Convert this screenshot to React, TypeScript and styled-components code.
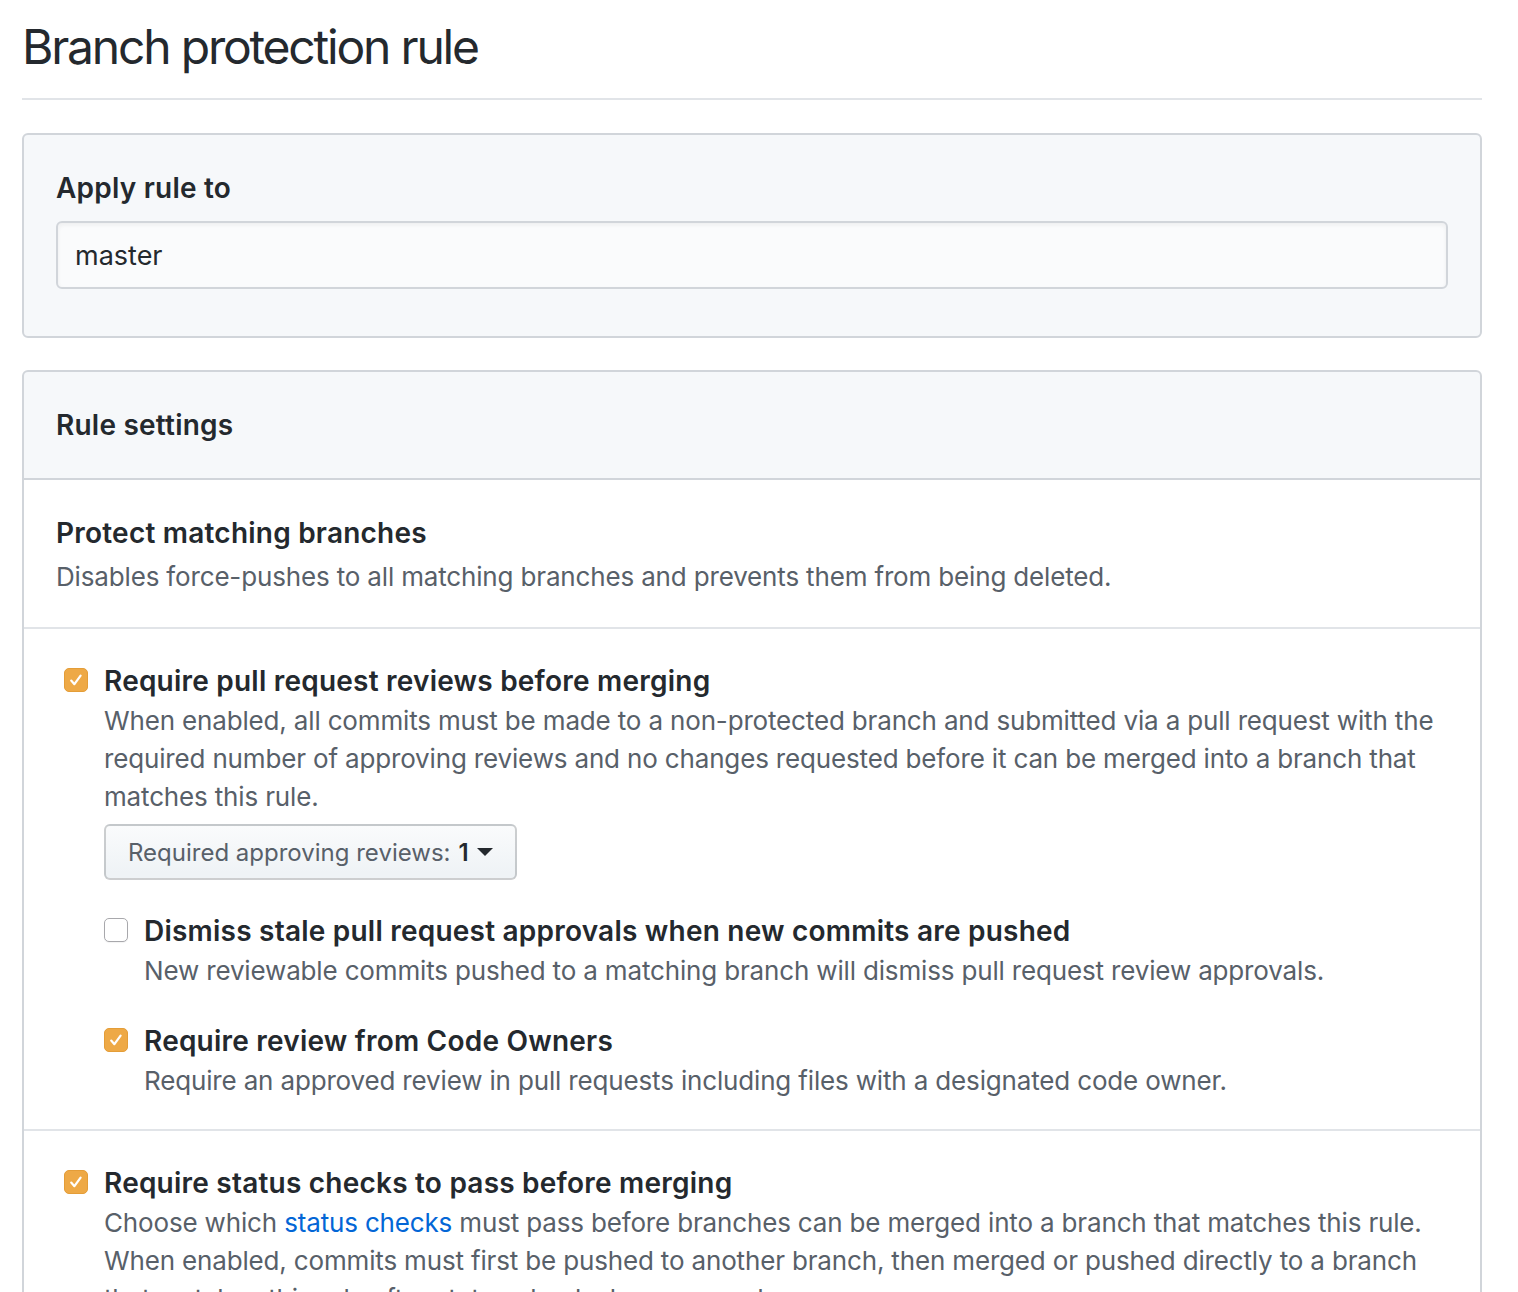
import React from 'react';
import styled, { createGlobalStyle } from 'styled-components';

const GlobalStyle = createGlobalStyle`
    html, body {
        margin: 0;
        padding: 0;
        background: #ffffff;
    }
    body {
        font-family: Inter, "Liberation Sans", Arial, sans-serif;
        color: #24292e;
        -webkit-font-smoothing: antialiased;
    }
`;

const Page = styled.div`
    padding: 0 36px 0 22px;
`;

const PageTitle = styled.h2`
    margin: 0 0 33px;
    padding: 17px 0 21px;
    font-size: 48px;
    line-height: 60px;
    font-weight: 400;
    letter-spacing: -2.2px;
    color: #24292e;
    border-bottom: 2px solid #e1e4e8;
`;

const Box = styled.div`
    background: #f6f8fa;
    border: 2px solid #d1d5da;
    border-radius: 6px;
    margin-bottom: 32px;
`;

const BoxBody = styled.div`
    padding: 32px 32px 47px;
`;

const Label = styled.h3<{ $flush?: boolean }>`
    margin: ${(p) => (p.$flush ? '0' : '0 0 12px')};
    font-size: 28px;
    line-height: 42px;
    font-weight: 600;
    letter-spacing: 0.22px;
`;

const TextInput = styled.input`
    display: block;
    box-sizing: border-box;
    width: 100%;
    height: 68px;
    padding: 0 17px;
    font: inherit;
    font-size: 27px;
    color: #24292e;
    background: #fafbfc;
    border: 2px solid #d1d5da;
    border-radius: 6px;
    box-shadow: inset 0 2px 4px rgba(27, 31, 35, 0.06);
    outline: none;
`;

const BoxHeader = styled.div`
    padding: 32px;
    border-bottom: 2px solid #d1d5da;
`;

const Section = styled.div<{ $first?: boolean }>`
    background: #ffffff;
    padding: ${(p) => (p.$first ? '33px 32px 31px' : '32px 32px 29px')};
    border-top: ${(p) => (p.$first ? 'none' : '2px solid #e1e4e8')};
    &:last-child {
        border-bottom-left-radius: 6px;
        border-bottom-right-radius: 6px;
    }
`;

const SectionTitle = styled.h4`
    margin: 0;
    font-size: 28px;
    line-height: 41px;
    font-weight: 600;
    letter-spacing: 0.22px;
    color: #24292e;
`;

const Note = styled.p<{ $spaced?: boolean }>`
    margin: ${(p) => (p.$spaced ? '4px 0 0' : '0')};
    font-size: 26px;
    line-height: 38px;
    letter-spacing: -0.16px;
    color: #586069;
`;

const Link = styled.a`
    color: #0366d6;
    text-decoration: none;
`;

const CheckItem = styled.div<{ $nested?: boolean }>`
    display: grid;
    grid-template-columns: 48px 1fr;
    margin: ${(p) => (p.$nested ? '31px 0 0 -8px' : '0')};
`;

const CheckBox = styled.span<{ $checked?: boolean }>`
    box-sizing: border-box;
    width: 24px;
    height: 24px;
    margin: 7px 0 0 8px;
    border-radius: 5px;
    display: flex;
    align-items: center;
    justify-content: center;
    background: ${(p) => (p.$checked ? '#eea946' : '#ffffff')};
    border: ${(p) => (p.$checked ? '1px solid #e49d38' : '1.5px solid #a8a8ac')};
    box-shadow: ${(p) => (p.$checked ? 'none' : '0 1px 1px rgba(0,0,0,0.05)')};
`;

const Dropdown = styled.button`
    display: inline-flex;
    align-items: center;
    box-sizing: border-box;
    height: 56px;
    margin-top: 8px;
    padding: 0 22px 0 22px;
    font: inherit;
    font-size: 24px;
    color: #586069;
    background: linear-gradient(#fafbfc, #eff3f6 90%);
    border: 2px solid rgba(27, 31, 35, 0.2);
    border-radius: 6px;
    cursor: pointer;
`;

const DropdownValue = styled.strong`
    color: #24292e;
    font-weight: 600;
    margin-left: 8px;
`;

const Caret = styled.span`
    display: inline-block;
    width: 0;
    height: 0;
    margin-left: 8px;
    border-top: 8px solid #24292e;
    border-left: 8px solid transparent;
    border-right: 8px solid transparent;
`;

function Check({ checked }: { checked?: boolean }) {
    return (
        <CheckBox $checked={checked}>
            {checked && (
                <svg width="16" height="16" viewBox="0 0 16 16">
                    <path d="M3.2 8.6 L6.4 12.2 L12.6 3.6" fill="none" stroke="#fff" strokeWidth="2.2" strokeLinecap="round" strokeLinejoin="round" />
                </svg>
            )}
        </CheckBox>
    );
}

function Option({ checked, title, nested, children }: { checked?: boolean; title: string; nested?: boolean; children?: React.ReactNode }) {
    return (
        <CheckItem $nested={nested}>
            <Check checked={checked} />
            <div>
                <SectionTitle>{title}</SectionTitle>
                {children}
            </div>
        </CheckItem>
    );
}

export default function App() {
    return (
        <Page>
            <GlobalStyle />
            <PageTitle>Branch protection rule</PageTitle>

            <Box>
                <BoxBody>
                    <Label>Apply rule to</Label>
                    <TextInput defaultValue="master" />
                </BoxBody>
            </Box>

            <Box>
                <BoxHeader>
                    <Label $flush>Rule settings</Label>
                </BoxHeader>

                <Section $first>
                    <SectionTitle>Protect matching branches</SectionTitle>
                    <Note $spaced>Disables force-pushes to all matching branches and prevents them from being deleted.</Note>
                </Section>

                <Section>
                    <Option checked title="Require pull request reviews before merging">
                        <Note>
                            When enabled, all commits must be made to a non-protected branch and submitted via a pull request with the
                            required number of approving reviews and no changes requested before it can be merged into a branch that
                            matches this rule.
                        </Note>
                        <Dropdown>
                            Required approving reviews:<DropdownValue>1</DropdownValue>
                            <Caret />
                        </Dropdown>
                        <Option nested title="Dismiss stale pull request approvals when new commits are pushed">
                            <Note>New reviewable commits pushed to a matching branch will dismiss pull request review approvals.</Note>
                        </Option>
                        <Option nested checked title="Require review from Code Owners">
                            <Note>Require an approved review in pull requests including files with a designated code owner.</Note>
                        </Option>
                    </Option>
                </Section>

                <Section>
                    <Option checked title="Require status checks to pass before merging">
                        <Note>
                            Choose which <Link href="#">status checks</Link> must pass before branches can be merged into a branch that
                            matches this rule. When enabled, commits must first be pushed to another branch, then merged or pushed
                            directly to a branch that matches this rule after status checks have passed.
                        </Note>
                    </Option>
                </Section>
            </Box>
        </Page>
    );
}
